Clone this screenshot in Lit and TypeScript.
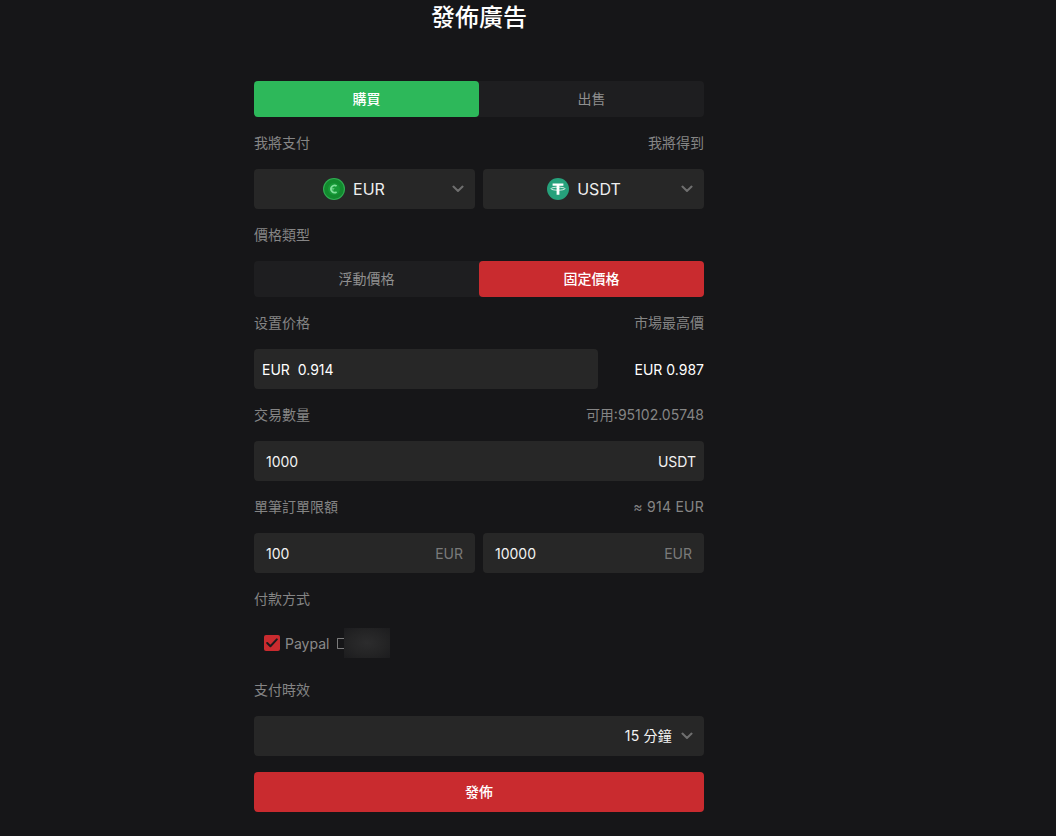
import { LitElement, html, css } from "lit";
import { customElement } from "lit/decorators.js";

const chevron = html`<svg class="chev" width="12" height="8" viewBox="0 0 12 8" fill="none"><path d="M1.4 1.6 L6 5.9 L10.6 1.6" stroke="#6f6f6f" stroke-width="2" stroke-linecap="round" stroke-linejoin="round"/></svg>`;

const eur = html`<svg class="coin" width="22" height="22" viewBox="0 0 22 22">
  <circle cx="11" cy="11" r="11" fill="#2fae52"/>
  <circle cx="11" cy="11" r="9.9" fill="#128a2e"/>
  <circle cx="11" cy="11" r="6" fill="#179a38"/>
  <path d="M13.6 8 A3.6 3.6 0 1 0 13.6 14" fill="none" stroke="#7fe09a" stroke-width="1.7"/>
  <path d="M8 10.5 H11.4 M8 11.8 H11" stroke="#7fe09a" stroke-width="0.6"/>
</svg>`;

const usdt = html`<svg class="coin" width="22" height="22" viewBox="0 0 22 22">
  <circle cx="11" cy="11" r="11" fill="#26a17b"/>
  <path d="M5.6 5.4 H16.4 V7.8 H12.4 V16.8 H9.6 V7.8 H5.6 Z" fill="#fff"/>
  <ellipse cx="11" cy="10.7" rx="7" ry="1.5" fill="none" stroke="#fff" stroke-width="0.8"/>
</svg>`;

@customElement("app-root")
export class AppRoot extends LitElement {
  static styles = css`
    :host {
      display: block;
      min-height: 836px;
      background: #161618;
      font-family: Inter, "Noto Sans CJK TC", "Noto Sans CJK SC", sans-serif;
      font-size: 14px;
      color: #fff;
    }
    .form {
      width: 450px;
      margin-left: 254px;
      display: flex;
      flex-direction: column;
    }
    h1 {
      margin: 0 0 47px;
      height: 34px;
      line-height: 36px;
      font-size: 24px;
      font-weight: 500;
      text-align: center;
      color: #fff;
    }
    .tabs {
      display: grid;
      grid-template-columns: 225px 225px;
      height: 36px;
      background: #1e1e20;
      border-radius: 4px;
    }
    .tab {
      display: flex;
      align-items: center;
      justify-content: center;
      box-sizing: border-box;
      padding-bottom: 2px;
      border-radius: 4px;
      font-size: 14px;
      color: #8f8f8f;
    }
    .tab.green { background: #2db85a; color: #fff; font-weight: 500; }
    .tab.red { background: #c92b2f; color: #fff; font-weight: 500; }
    .labels {
      display: flex;
      justify-content: space-between;
      align-items: center;
      box-sizing: border-box;
      height: 20px;
      padding-bottom: 2px;
      margin: 16px 0;
      font-size: 14px;
      color: #858585;
    }
    .two {
      display: grid;
      grid-template-columns: 221px 221px;
      column-gap: 8px;
    }
    .box {
      height: 40px;
      background: #272727;
      border-radius: 4px;
      display: flex;
      align-items: center;
      box-sizing: border-box;
    }
    .select { padding: 0 11px 0 0; justify-content: flex-end; font-size: 16px; color: #eee; }
    .select .val { flex: 1; display: flex; justify-content: center; align-items: center; gap: 8px; }
    .select.eur .val { padding-left: 2px; }
    .select.usdt .val { padding-left: 4px; }
    .price-row {
      display: flex;
      justify-content: space-between;
      align-items: center;
    }
    .price { width: 344px; padding-left: 8px; }
    .max { letter-spacing: 0.02em; }
    .wide { letter-spacing: 0.25px; }
    .field { padding: 0 8px 0 12px; justify-content: space-between; color: #f2f2f2; }
    .field.pad { padding-right: 12px; }
    .unit { color: #7a7a7a; }
    .unit.bright { color: #f2f2f2; }
    .pay {
      height: 30px;
      margin-top: 3px;
      margin-bottom: 6px;
      padding-left: 10px;
      display: flex;
      align-items: center;
      color: #8a8a8a;
    }
    .check {
      width: 16px;
      height: 16px;
      border-radius: 2px;
      background: #c92b2f;
      display: flex;
      align-items: center;
      justify-content: center;
      margin-right: 5px;
    }
    .paypal { margin-right: 8px; font-size: 14px; }
    .empty {
      width: 7px;
      height: 11px;
      border: 1px solid #7a7a7a;
      box-sizing: border-box;
      border-radius: 1px 0 0 1px;
      border-right: none;
    }
    .blur {
      width: 46px;
      height: 30px;
      background: radial-gradient(ellipse at center, #2c2c2d 0%, #242425 55%, #1c1c1e 100%);
    }
    .time { justify-content: flex-end; padding-right: 11px; font-size: 14px; color: #f2f2f2; }
    .time .txt { margin-right: 9px; letter-spacing: 0.2px; padding-bottom: 2px; }
    .submit {
      height: 40px;
      margin-top: 16px;
      background: #c92b2f;
      border-radius: 4px;
      display: flex;
      align-items: center;
      justify-content: center;
      box-sizing: border-box;
      padding-bottom: 2px;
      font-size: 14px;
      font-weight: 500;
      color: #fff;
    }
  `;

  render() {
    return html`
      <div class="form">
        <h1>發佈廣告</h1>
        <div class="tabs">
          <div class="tab green">購買</div>
          <div class="tab">出售</div>
        </div>
        <div class="labels"><span>我將支付</span><span>我將得到</span></div>
        <div class="two">
          <div class="box select eur"><span class="val">${eur}EUR</span>${chevron}</div>
          <div class="box select usdt"><span class="val">${usdt}USDT</span>${chevron}</div>
        </div>
        <div class="labels"><span>價格類型</span></div>
        <div class="tabs">
          <div class="tab">浮動價格</div>
          <div class="tab red">固定價格</div>
        </div>
        <div class="labels"><span>设置价格</span><span>市場最高價</span></div>
        <div class="price-row">
          <div class="box price">EUR&nbsp; 0.914</div>
          <span>EUR 0.987</span>
        </div>
        <div class="labels"><span>交易數量</span><span>可用:95102.05748</span></div>
        <div class="box field"><span>1000</span><span class="unit bright">USDT</span></div>
        <div class="labels"><span>單筆訂單限額</span><span class="wide">≈ 914 EUR</span></div>
        <div class="two">
          <div class="box field pad"><span>100</span><span class="unit">EUR</span></div>
          <div class="box field pad"><span>10000</span><span class="unit">EUR</span></div>
        </div>
        <div class="labels"><span>付款方式</span></div>
        <div class="pay">
          <span class="check">
            <svg width="12" height="10" viewBox="0 0 12 10" fill="none"><path d="M1.2 5 L4.4 8.2 L10.8 1.4" stroke="#1a1a1d" stroke-width="2" stroke-linecap="round" stroke-linejoin="round"/></svg>
          </span>
          <span class="paypal">Paypal</span>
          <span class="empty"></span>
          <span class="blur"></span>
        </div>
        <div class="labels"><span>支付時效</span></div>
        <div class="box time"><span class="txt">15 分鐘</span>${chevron}</div>
        <div class="submit">發佈</div>
      </div>
    `;
  }
}
